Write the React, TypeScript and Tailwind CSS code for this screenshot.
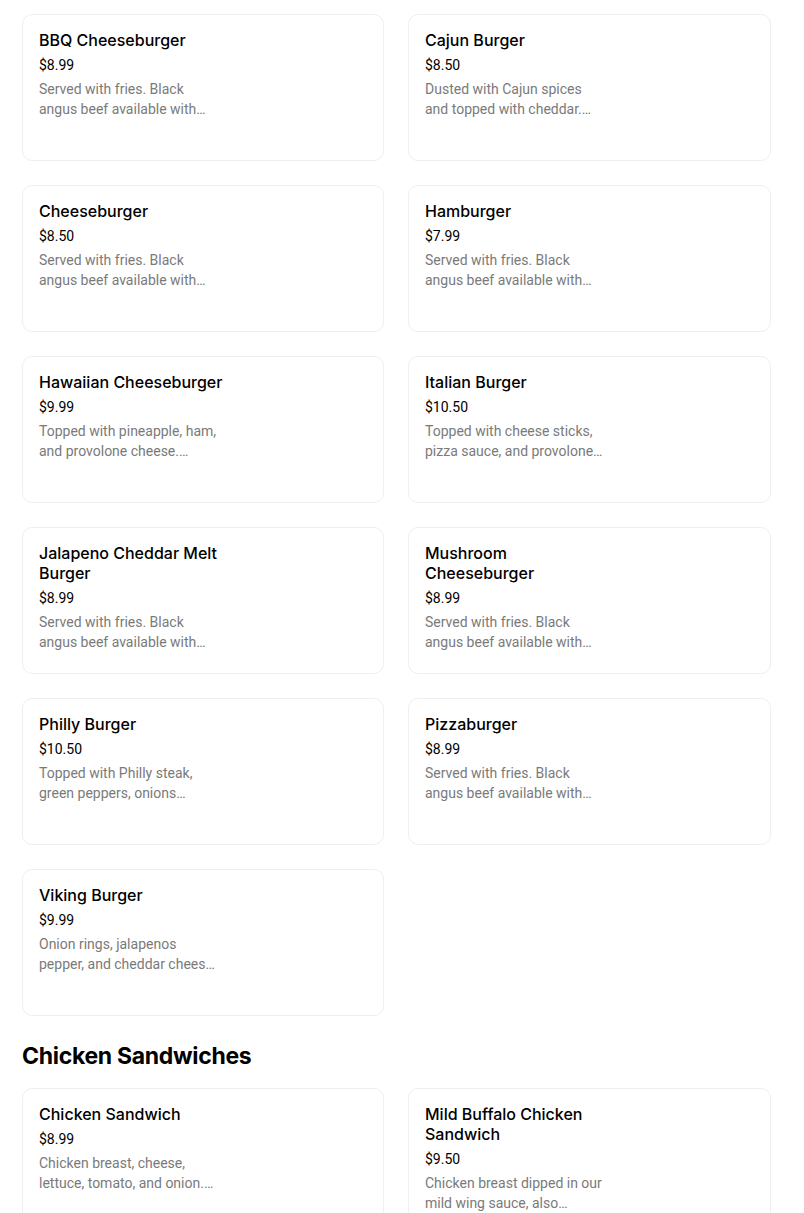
import React from 'react';

type Item = { name: string; price: string; desc: [string, string] };

const burgers: Item[] = [
  { name: 'BBQ Cheeseburger', price: '$8.99', desc: ['Served with fries. Black', 'angus beef available with…'] },
  { name: 'Cajun Burger', price: '$8.50', desc: ['Dusted with Cajun spices', 'and topped with cheddar.…'] },
  { name: 'Cheeseburger', price: '$8.50', desc: ['Served with fries. Black', 'angus beef available with…'] },
  { name: 'Hamburger', price: '$7.99', desc: ['Served with fries. Black', 'angus beef available with…'] },
  { name: 'Hawaiian Cheeseburger', price: '$9.99', desc: ['Topped with pineapple, ham,', 'and provolone cheese.…'] },
  { name: 'Italian Burger', price: '$10.50', desc: ['Topped with cheese sticks,', 'pizza sauce, and provolone…'] },
  { name: 'Jalapeno Cheddar Melt Burger', price: '$8.99', desc: ['Served with fries. Black', 'angus beef available with…'] },
  { name: 'Mushroom Cheeseburger', price: '$8.99', desc: ['Served with fries. Black', 'angus beef available with…'] },
  { name: 'Philly Burger', price: '$10.50', desc: ['Topped with Philly steak,', 'green peppers, onions…'] },
  { name: 'Pizzaburger', price: '$8.99', desc: ['Served with fries. Black', 'angus beef available with…'] },
  { name: 'Viking Burger', price: '$9.99', desc: ['Onion rings, jalapenos', 'pepper, and cheddar chees…'] },
];

const chicken: Item[] = [
  { name: 'Chicken Sandwich', price: '$8.99', desc: ['Chicken breast, cheese,', 'lettuce, tomato, and onion.…'] },
  { name: 'Mild Buffalo Chicken Sandwich', price: '$9.50', desc: ['Chicken breast dipped in our', 'mild wing sauce, also…'] },
];

function ItemCard({ item }: { item: Item }) {
  return (
    <div className="h-[147px] rounded-[10px] border border-[#efefef] bg-white px-4 pt-[15px]">
      <div className="w-[190px]">
        <div className="text-[16px] font-medium leading-5 text-black">{item.name}</div>
        <div className="mt-[5px] font-['Roboto'] text-[14px] leading-5 text-black">{item.price}</div>
        <div className="mt-[4px] font-['Roboto'] text-[14px] leading-5 whitespace-nowrap text-[#7a7a7a]">
          <div>{item.desc[0]}</div>
          <div>{item.desc[1]}</div>
        </div>
      </div>
    </div>
  );
}

export default function App() {
  return (
    <div className="min-h-[1213px] bg-white pl-[22px] pr-[33px] pt-[14px]" style={{ fontFamily: 'Inter, "Noto Sans", sans-serif' }}>
      <div className="grid grid-cols-[362px_363px] gap-6">
        {burgers.map((item) => (
          <ItemCard key={item.name} item={item} />
        ))}
      </div>
      <h2 className="mt-6 text-[23px] font-bold leading-8 tracking-[-0.3px] text-black">Chicken Sandwiches</h2>
      <div className="mt-4 grid grid-cols-[362px_363px] gap-6">
        {chicken.map((item) => (
          <ItemCard key={item.name} item={item} />
        ))}
      </div>
    </div>
  );
}
